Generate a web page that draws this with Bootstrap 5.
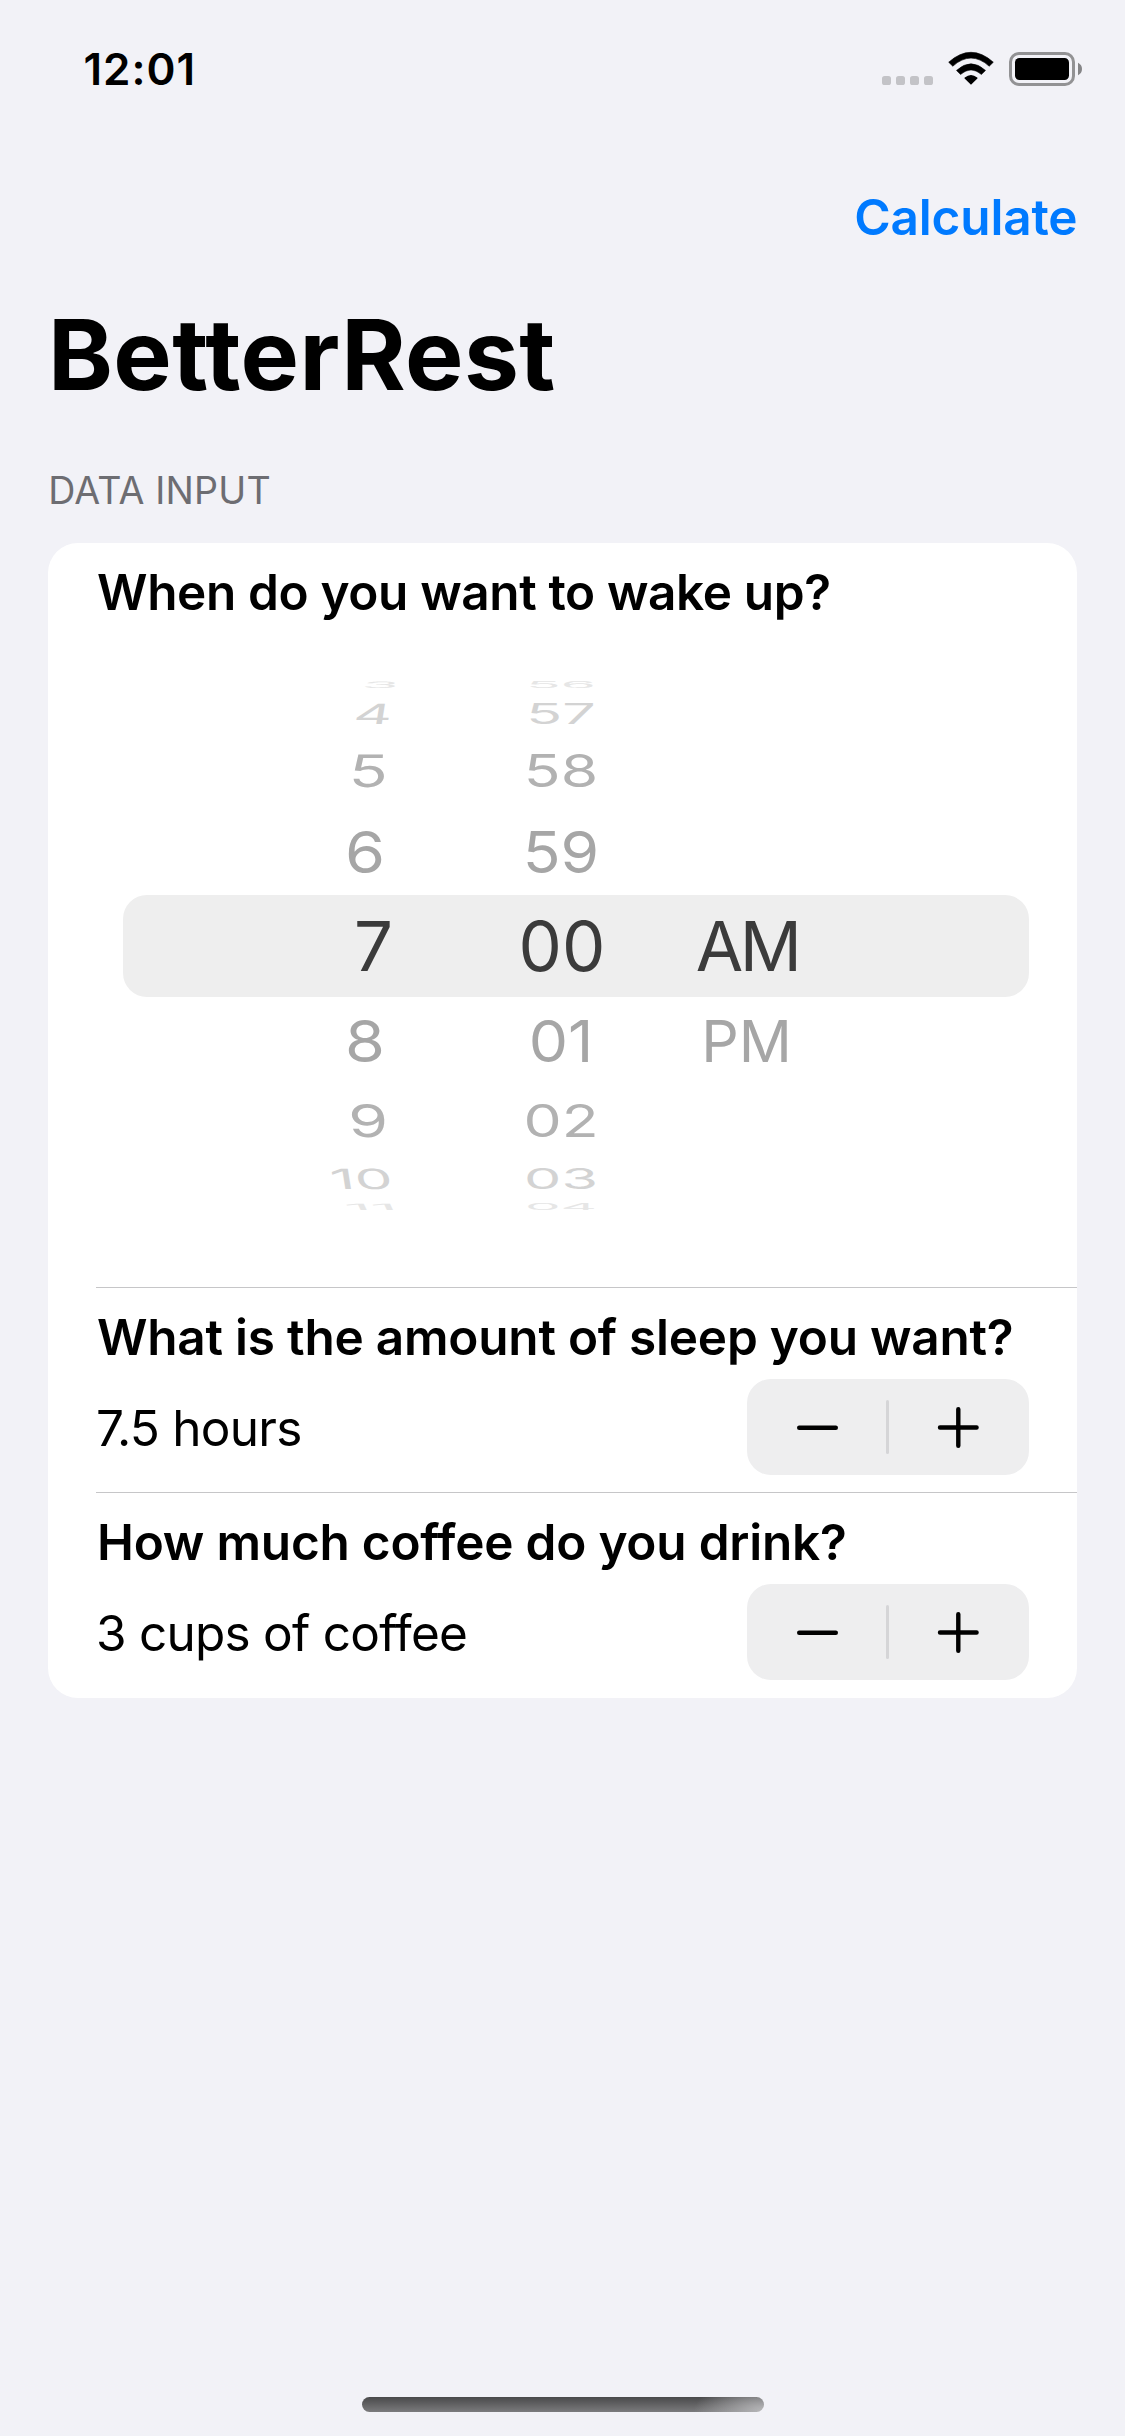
<!DOCTYPE html>
<html lang="en">
<head>
<meta charset="utf-8">
<meta name="viewport" content="width=device-width, initial-scale=1">
<title>BetterRest</title>
<link href="https://cdn.jsdelivr.net/npm/bootstrap@5.3.0/dist/css/bootstrap.min.css" rel="stylesheet">
<style>
  body { font-family: Inter, "Liberation Sans", sans-serif; background: #f2f2f7; color: #000; width: 1125px; height: 2436px; overflow: hidden; }
  .status-bar { height: 138px; padding: 0 43px 0 83.5px; }
  .clock { font-size: 44px; font-weight: 600; letter-spacing: 1px; line-height: 60px; }
  .top-nav { height: 157px; padding-right: 47.5px; }
  .calc-link { font-size: 49.5px; font-weight: 600; line-height: 60px; letter-spacing: -.15px; color: #007aff; }
  .screen-title { font-size: 98.2px; font-weight: 700; line-height: 120px; letter-spacing: .4px; padding-left: 48px; }
  .section-label { font-size: 37.6px; line-height: 60px; letter-spacing: .2px; color: #6d6d72; padding: 46px 0 22px 48.2px; }
  .form-card { margin: 0 48px; border-radius: 30px; }
  .form-row { padding: 19px 48px 0 49px; }
  .form-row + .form-row::before { content: ""; display: block; height: 1px; background: #c6c6c8; margin: -19px -48px 19px -1px; }
  .question { font-size: 49.5px; font-weight: 600; line-height: 60px; letter-spacing: -.22px; font-variant-ligatures: none; }
  .q-wake { letter-spacing: -.36px; }
  .answer { font-size: 49.5px; line-height: 60px; letter-spacing: -.76px; padding-top: 1px; margin-left: -1px; }
  .value-line { margin-top: 12px; padding-bottom: 17px; }
  .value-line.last { padding-bottom: 18px; }

  .stepper { width: 282px; height: 96px; border-radius: 24px; background: #eeeeef; }
  .stepper-btn { width: 139.5px; height: 96px; }
  .stepper-btn:first-child { width: 139px; }
  .stepper-line { width: 3px; height: 54px; border-radius: 2px; background: #d5d5d7; }

  .wheel { margin: 55px 0 72px 26px; }
  .tick { display: grid; grid-template-columns: 270px 75px 187px 187px 1fr; align-items: center; font-size: 57.7px; line-height: 0; white-space: nowrap;
          --v: 1; --hx: 1; --mx: 1; --shift: 0px; --lean: 0deg; }
  .tick span { display: block; line-height: 0; }
  .hr { grid-column: 1; text-align: right; transform-origin: right center; transform: translateX(var(--shift)) skewX(var(--lean)) scale(var(--hx), var(--v)); }
  .mn { grid-column: 3; text-align: center; transform: translateX(-.5px) scale(var(--mx), var(--v)); }
  .ap { grid-column: 4; text-align: center; }
  .now { height: 102px; border-radius: 24px; background: #eeeeee; color: #3b3b3b; font-size: 68.8px; }
  .now .mn { transform: translateX(.5px); }
  .now .ap { letter-spacing: -3.5px; transform: translateX(-1.5px); }
  .t1 { height: 87px; color: #a6a6a6; --hx: 1.12; --mx: 1.08; --shift: -8px; }
  .t1 .ap { transform: translateX(-2px) scaleX(1.02); }
  .t2 { height: 74px; color: #b2b2b2; --v: .775; --hx: 1.11; --mx: 1.05; --shift: -5px; --lean: -3deg; }
  .t3 { height: 41px; color: #d3d3d3; --v: .48; --hx: 1.04; --mx: 1.025; --shift: -.5px; --lean: -9deg; }
  .t4 { height: 16px; color: #e6e6e6; --v: .15; --hx: 1.03; --mx: .98; --shift: 6px; --lean: -25deg; }
  .below.t2 { --lean: 3deg; }
  .below.t3 { --lean: 9deg; }
  .below.t4 { --lean: 25deg; --hx: 1.12; --shift: 4px; }

  .home-bar { width: 402px; height: 15px; border-radius: 8px; margin: auto 361px 24px 362px;
    background: radial-gradient(ellipse 70px 30px at 100% 90%, rgba(190,190,192,.9), rgba(190,190,192,0)), linear-gradient(#49494a, #7b7b7d); }
</style>
</head>
<body class="d-flex flex-column m-0">

<header class="status-bar d-flex align-items-center justify-content-between">
  <div class="clock">12:01</div>
  <svg width="201" height="36" viewBox="881 51 201 36" aria-hidden="true">
    <g fill="#c3c3c7">
      <rect x="882" y="76" width="9" height="9" rx="2.6"/>
      <rect x="896" y="76" width="9" height="9" rx="2.6"/>
      <rect x="910" y="76" width="9" height="9" rx="2.6"/>
      <rect x="924" y="76" width="9" height="9" rx="2.6"/>
    </g>
    <path d="M971 84.8L964.6 78.6Q964.1 78 964.8 77.5Q971 72.5 977.2 77.5Q977.9 78 977.4 78.6Z"/>
    <path d="M956.5 70.4Q971 57.2 985.5 70.4L981.4 74.4Q971 65.4 960.6 74.4Z" stroke="#000" stroke-width=".6" stroke-linejoin="round"/>
    <path d="M948.7 62.2Q971 42.4 993.3 62.2L989.2 66.2Q971 50 952.8 66.2Z" stroke="#000" stroke-width=".6" stroke-linejoin="round"/>
    <rect x="1010.5" y="53.5" width="63" height="31" rx="8.5" fill="none" stroke="#929294" stroke-width="3"/>
    <rect x="1015" y="58" width="54" height="22" rx="4.5"/>
    <path d="M1078 62.8Q1082 64.8 1082 69T1078 75.2Z" fill="#858587"/>
  </svg>
</header>

<nav class="top-nav d-flex align-items-center justify-content-end">
  <a class="calc-link text-decoration-none" href="#">Calculate</a>
</nav>

<h1 class="screen-title m-0">BetterRest</h1>
<div class="section-label">DATA INPUT</div>

<main class="form-card bg-white overflow-hidden">
  <section class="form-row">
    <div class="question q-wake">When do you want to wake up?</div>
    <div class="wheel d-flex flex-column">
      <div class="tick t4"><span class="hr">3</span><span class="mn">56</span></div>
      <div class="tick t3"><span class="hr">4</span><span class="mn">57</span></div>
      <div class="tick t2"><span class="hr">5</span><span class="mn">58</span></div>
      <div class="tick t1"><span class="hr">6</span><span class="mn">59</span></div>
      <div class="tick now"><span class="hr">7</span><span class="mn">00</span><span class="ap">AM</span></div>
      <div class="tick t1 below"><span class="hr">8</span><span class="mn">01</span><span class="ap">PM</span></div>
      <div class="tick t2 below"><span class="hr">9</span><span class="mn">02</span></div>
      <div class="tick t3 below"><span class="hr">10</span><span class="mn">03</span></div>
      <div class="tick t4 below"><span class="hr">11</span><span class="mn">04</span></div>
    </div>
  </section>

  <section class="form-row">
    <div class="question">What is the amount of sleep you want?</div>
    <div class="value-line d-flex align-items-center justify-content-between">
      <div class="answer">7.5 hours</div>
      <div class="stepper d-flex align-items-center">
        <div class="stepper-btn"><svg class="d-block" width="139" height="96" fill="none" stroke="#000" stroke-width="4.4" stroke-linecap="round"><path d="M52.2 48.7H88.8"/></svg></div>
        <div class="stepper-line"></div>
        <div class="stepper-btn"><svg class="d-block" width="139" height="96" fill="none" stroke="#000" stroke-width="4.4" stroke-linecap="round"><path d="M51 48.5H87.6M69.3 30.2V66.8"/></svg></div>
      </div>
    </div>
  </section>

  <section class="form-row">
    <div class="question">How much coffee do you drink?</div>
    <div class="value-line last d-flex align-items-center justify-content-between">
      <div class="answer">3 cups of coffee</div>
      <div class="stepper d-flex align-items-center">
        <div class="stepper-btn"><svg class="d-block" width="139" height="96" fill="none" stroke="#000" stroke-width="4.4" stroke-linecap="round"><path d="M52.2 48.7H88.8"/></svg></div>
        <div class="stepper-line"></div>
        <div class="stepper-btn"><svg class="d-block" width="139" height="96" fill="none" stroke="#000" stroke-width="4.4" stroke-linecap="round"><path d="M51 48.5H87.6M69.3 30.2V66.8"/></svg></div>
      </div>
    </div>
  </section>
</main>

<div class="home-bar"></div>

<script src="https://cdn.jsdelivr.net/npm/bootstrap@5.3.0/dist/js/bootstrap.bundle.min.js"></script>
</body>
</html>
